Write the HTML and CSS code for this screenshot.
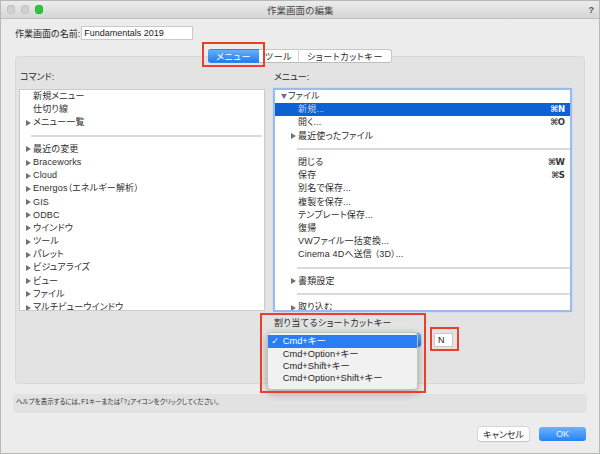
FILE: index.html
```html
<!DOCTYPE html>
<html lang="ja">
<head>
<meta charset="utf-8">
<title>作業画面の編集</title>
<link rel="stylesheet" href="styles.css">
</head>
<body>
<div class="window">
  <div class="titlebar">
    <div class="lights"><span class="light"></span><span class="light"></span><span class="light green"></span></div>
    <div class="title">作業画面の編集</div>
    <div class="help-q">?</div>
  </div>

  <div class="name-row">
    <span class="name-label">作業画面の名前:</span>
    <span class="text-input name-input">Fundamentals 2019</span>
  </div>

  <div class="tabs">
    <span class="seg seg-menu active">メニュー</span>
    <span class="seg seg-tool">ツール</span>
    <span class="seg seg-key">ショートカットキー</span>
  </div>

  <div class="panel">
    <div class="col">
      <div class="col-label">コマンド:</div>
      <div class="list list-left">
        <div class="row plain">新規メニュー</div>
        <div class="row plain">仕切り線</div>
        <div class="row"><span class="tri"></span>メニュー一覧</div>
        <div class="row sep"></div>
        <div class="row"><span class="tri"></span>最近の変更</div>
        <div class="row"><span class="tri"></span>Braceworks</div>
        <div class="row"><span class="tri"></span>Cloud</div>
        <div class="row"><span class="tri"></span>Energos（エネルギー解析）</div>
        <div class="row"><span class="tri"></span>GIS</div>
        <div class="row"><span class="tri"></span>ODBC</div>
        <div class="row"><span class="tri"></span>ウインドウ</div>
        <div class="row"><span class="tri"></span>ツール</div>
        <div class="row"><span class="tri"></span>パレット</div>
        <div class="row"><span class="tri"></span>ビジュアライズ</div>
        <div class="row"><span class="tri"></span>ビュー</div>
        <div class="row"><span class="tri"></span>ファイル</div>
        <div class="row"><span class="tri"></span>マルチビューウインドウ</div>
      </div>
    </div>

    <div class="col">
      <div class="col-label">メニュー:</div>
      <div class="list list-right">
        <div class="row top"><span class="tri down"></span>ファイル</div>
        <div class="row child selected"><span class="txt">新規...</span><span class="key">⌘N</span></div>
        <div class="row child"><span class="txt">開く...</span><span class="key">⌘O</span></div>
        <div class="row child-tri"><span class="tri"></span>最近使ったファイル</div>
        <div class="row sep"></div>
        <div class="row child"><span class="txt">閉じる</span><span class="key">⌘W</span></div>
        <div class="row child"><span class="txt">保存</span><span class="key">⌘S</span></div>
        <div class="row child"><span class="txt">別名で保存...</span></div>
        <div class="row child"><span class="txt">複製を保存...</span></div>
        <div class="row child"><span class="txt">テンプレート保存...</span></div>
        <div class="row child"><span class="txt">復帰</span></div>
        <div class="row child"><span class="txt">VWファイル一括変換...</span></div>
        <div class="row child"><span class="txt">Cinema 4Dへ送信 （3D）...</span></div>
        <div class="row sep"></div>
        <div class="row child-tri"><span class="tri"></span>書類設定</div>
        <div class="row sep"></div>
        <div class="row child-tri"><span class="tri"></span>取り込む</div>
      </div>

      <div class="assign">
        <div class="assign-label">割り当てるショートカットキー</div>
        <div class="assign-row">
          <div class="popup-btn"><span class="popup-arrows"></span></div>
          <div class="text-input key-input">N</div>
        </div>
        <div class="popup-menu">
          <div class="pm-item checked"><span class="check">✓</span>Cmd+キー</div>
          <div class="pm-item"><span class="check"></span>Cmd+Option+キー</div>
          <div class="pm-item"><span class="check"></span>Cmd+Shift+キー</div>
          <div class="pm-item"><span class="check"></span>Cmd+Option+Shift+キー</div>
        </div>
      </div>
    </div>
  </div>

  <div class="helpbox">ヘルプを表示するには、F1キーまたは「?」アイコンをクリックしてください。</div>

  <div class="actions">
    <span class="btn btn-cancel">キャンセル</span>
    <span class="btn btn-ok">OK</span>
  </div>

  <div class="mark mark-tab"></div>
  <div class="mark mark-popup"></div>
  <div class="mark mark-key"></div>
</div>
</body>
</html>
```

FILE: styles.css
```css
html, body {
  margin: 0;
  padding: 0;
}
body {
  width: 600px;
  height: 454px;
  overflow: hidden;
  background: #ececec;
}
.window {
  position: relative;
  width: 600px;
  height: 454px;
  box-sizing: border-box;
  border: 1px solid #b3b9b3;
  background: #ececec;
  font-family: "Liberation Sans", "Noto Sans CJK JP", sans-serif;
  font-size: 9px;
  font-feature-settings: "palt";
  color: #2a2a2a;
  overflow: hidden;
}

/* title bar */
.titlebar {
  height: 17px;
  display: grid;
  grid-template-columns: 1fr auto 1fr;
  align-items: center;
  background: linear-gradient(#ececec, #d6d6d6);
  border-bottom: 1px solid #bfbfbf;
  padding: 0 5px 0 5.5px;
}
.lights {
  display: flex;
  gap: 5.5px;
  align-items: center;
}
.light {
  width: 8.5px;
  height: 8.5px;
  border-radius: 50%;
  background: #d0d0d0;
  box-shadow: inset 0 0 0 0.5px #b8b8b8;
}
.light.green {
  background: #2bc83f;
  box-shadow: inset 0 0 0 0.5px #1ea72f;
}
.title {
  font-size: 9.5px;
  font-feature-settings: normal;
  color: #474747;
}
.help-q {
  justify-self: end;
  font-weight: bold;
  font-size: 9px;
  color: #555;
}

/* name row */
.name-row {
  display: flex;
  align-items: center;
  height: 14px;
  margin-top: 7px;
  padding-left: 14px;
}
.name-label {
  width: 65.7px;
  font-size: 9px;
}
.text-input {
  box-sizing: border-box;
  background: #fff;
  border: 1px solid #c9c9c9;
  height: 14px;
  line-height: 12px;
  font-size: 9px;
  color: #222;
}
.name-input {
  width: 112px;
  padding-left: 2.5px;
}

/* tabs */
.tabs {
  position: relative;
  z-index: 1;
  display: flex;
  justify-content: center;
  height: 14px;
  margin-top: 9px;
}
.seg {
  box-sizing: border-box;
  height: 14px;
  display: flex;
  align-items: center;
  justify-content: center;
  background: #fff;
  border-top: 0.5px solid #c8c8c8;
  border-bottom: 1px solid #bcbcbc;
  font-size: 9px;
  letter-spacing: 0.6px;
  color: #2a2a2a;
}
.seg-menu {
  width: 51px;
  border-radius: 3px 0 0 3px;
}
.seg-tool {
  width: 39px;
}
.seg-key {
  width: 94px;
  border-left: 1px solid #d4d4d4;
  border-right: 0.5px solid #c8c8c8;
  border-radius: 0 3px 3px 0;
}
.seg.active {
  background: linear-gradient(#69affa, #1f7df4);
  border-color: #2d84f0;
  color: #fff;
}

/* main panel */
.panel {
  margin: -7px 14px 0 14px;
  height: 328px;
  box-sizing: border-box;
  background: #e3e3e3;
  border: 1px solid #d8d8d8;
  border-radius: 4px;
  padding: 15px 12px 0 3px;
  display: grid;
  grid-template-columns: 246px 1fr;
  column-gap: 8px;
  align-items: start;
}
.col-label {
  height: 11px;
  line-height: 11px;
  margin-bottom: 6px;
  padding-left: 1px;
}
.list {
  box-sizing: border-box;
  background: #fff;
  overflow: hidden;
}
.list-left {
  height: 222px;
  border: 1px solid #cacaca;
}
.list-right {
  height: 224px;
  margin-top: -1px;
  border: 2px solid #98bcec;
  box-shadow: 0 0 0 0.5px #c6daf4;
}
.row {
  height: 13.2px;
  line-height: 13.2px;
  white-space: nowrap;
  display: flex;
  align-items: center;
  color: #2e2e2e;
  letter-spacing: 0.15px;
}
.tri {
  display: inline-block;
  flex: none;
  width: 0;
  height: 0;
  border-left: 5px solid #727272;
  border-top: 3px solid transparent;
  border-bottom: 3px solid transparent;
  margin-right: 2px;
}
.tri.down {
  border-left: 3px solid transparent;
  border-right: 3px solid transparent;
  border-top: 5px solid #727272;
  border-bottom: 0;
  margin-right: 1px;
}
.list-left .row {
  padding-left: 6px;
}
.list-left .row.plain {
  padding-left: 13px;
}
.row.sep::after {
  content: "";
  display: block;
  flex: 1;
  height: 2px;
  background: #d9d9d9;
}
.list-left .row.sep {
  padding-left: 11px;
  padding-right: 2px;
}
.list-right .row.top {
  padding-left: 6px;
}
.list-right .row.child {
  padding-left: 23px;
  padding-right: 5px;
}
.list-right .row.child-tri {
  padding-left: 16px;
}
.list-right .row.child-tri .tri {
  margin-right: 2px;
}
.list-right .row.sep {
  padding-left: 22px;
}
.row .txt {
  flex: 1;
}
.row .key {
  font-family: "DejaVu Sans", "Liberation Sans", sans-serif;
  font-weight: bold;
  font-size: 8.5px;
  letter-spacing: 0;
  color: #333;
}
.row.selected {
  background: #0c62d0;
}
.row.selected .txt {
  color: #c5d3ee;
}
.row.selected .key {
  color: #fff;
}

/* shortcut assignment */
.assign {
  position: relative;
  margin-top: 6px;
}
.assign-label {
  height: 11px;
  line-height: 11px;
  padding-left: 1px;
  letter-spacing: 0.4px;
}
.assign-row {
  display: flex;
  margin-top: 4px;
}
.popup-btn {
  box-sizing: border-box;
  width: 148px;
  height: 14px;
  background: #fff;
  border-radius: 3px;
  box-shadow: 0 0 0 0.5px #c0c0c0;
  display: flex;
  justify-content: flex-end;
}
.popup-arrows {
  width: 12px;
  height: 14px;
  background: linear-gradient(#67acf9, #1f7cf3);
  border-radius: 0 3px 3px 0;
}
.key-input {
  width: 19px;
  margin-left: 13px;
  padding-left: 3px;
}
.popup-menu {
  position: absolute;
  left: -6.3px;
  top: 13.7px;
  width: 151px;
  box-sizing: border-box;
  padding: 2.8px 0 4px;
  background: #f1f1f1;
  border: 0.5px solid #c2c2c2;
  border-radius: 4px;
  box-shadow: 0 3px 8px rgba(0, 0, 0, 0.3);
  z-index: 2;
}
.pm-item {
  height: 12.3px;
  line-height: 12.3px;
  padding-left: 3.5px;
  display: flex;
  align-items: center;
  white-space: nowrap;
  font-size: 9.3px;
  color: #262626;
}
.pm-item .check {
  width: 11.5px;
  font-family: "DejaVu Sans", sans-serif;
  font-size: 9px;
}
.pm-item.checked {
  background: #2a7df4;
  color: #fff;
}

/* help */
.helpbox {
  margin: 10px 12px 0;
  height: 19px;
  box-sizing: border-box;
  background: #e2e2e2;
  border-radius: 4px;
  padding: 3px 3px;
  font-size: 6.5px;
  line-height: 9px;
  color: #333;
}

/* buttons */
.actions {
  display: flex;
  justify-content: flex-end;
  gap: 10px;
  margin-top: 14px;
  padding-right: 13px;
}
.btn {
  box-sizing: border-box;
  height: 14px;
  display: flex;
  align-items: center;
  justify-content: center;
  border-radius: 3px;
  font-size: 9px;
}
.btn-cancel {
  width: 51px;
  background: #fff;
  box-shadow: 0 0 0 0.5px #c2c2c2, 0 0.5px 1px rgba(0, 0, 0, 0.15);
  color: #2a2a2a;
}
.btn-ok {
  width: 47px;
  background: linear-gradient(#6db3fb, #2583f6);
  color: #eef5ff;
}

/* red annotation boxes */
.mark {
  position: absolute;
  box-sizing: border-box;
  border: 2px solid #e8402b;
  z-index: 5;
}
.mark-tab {
  left: 201px;
  top: 41px;
  width: 63px;
  height: 25px;
}
.mark-popup {
  left: 259px;
  top: 312px;
  width: 166px;
  height: 80px;
}
.mark-key {
  left: 429px;
  top: 325.5px;
  width: 28.5px;
  height: 24.5px;
}
```
